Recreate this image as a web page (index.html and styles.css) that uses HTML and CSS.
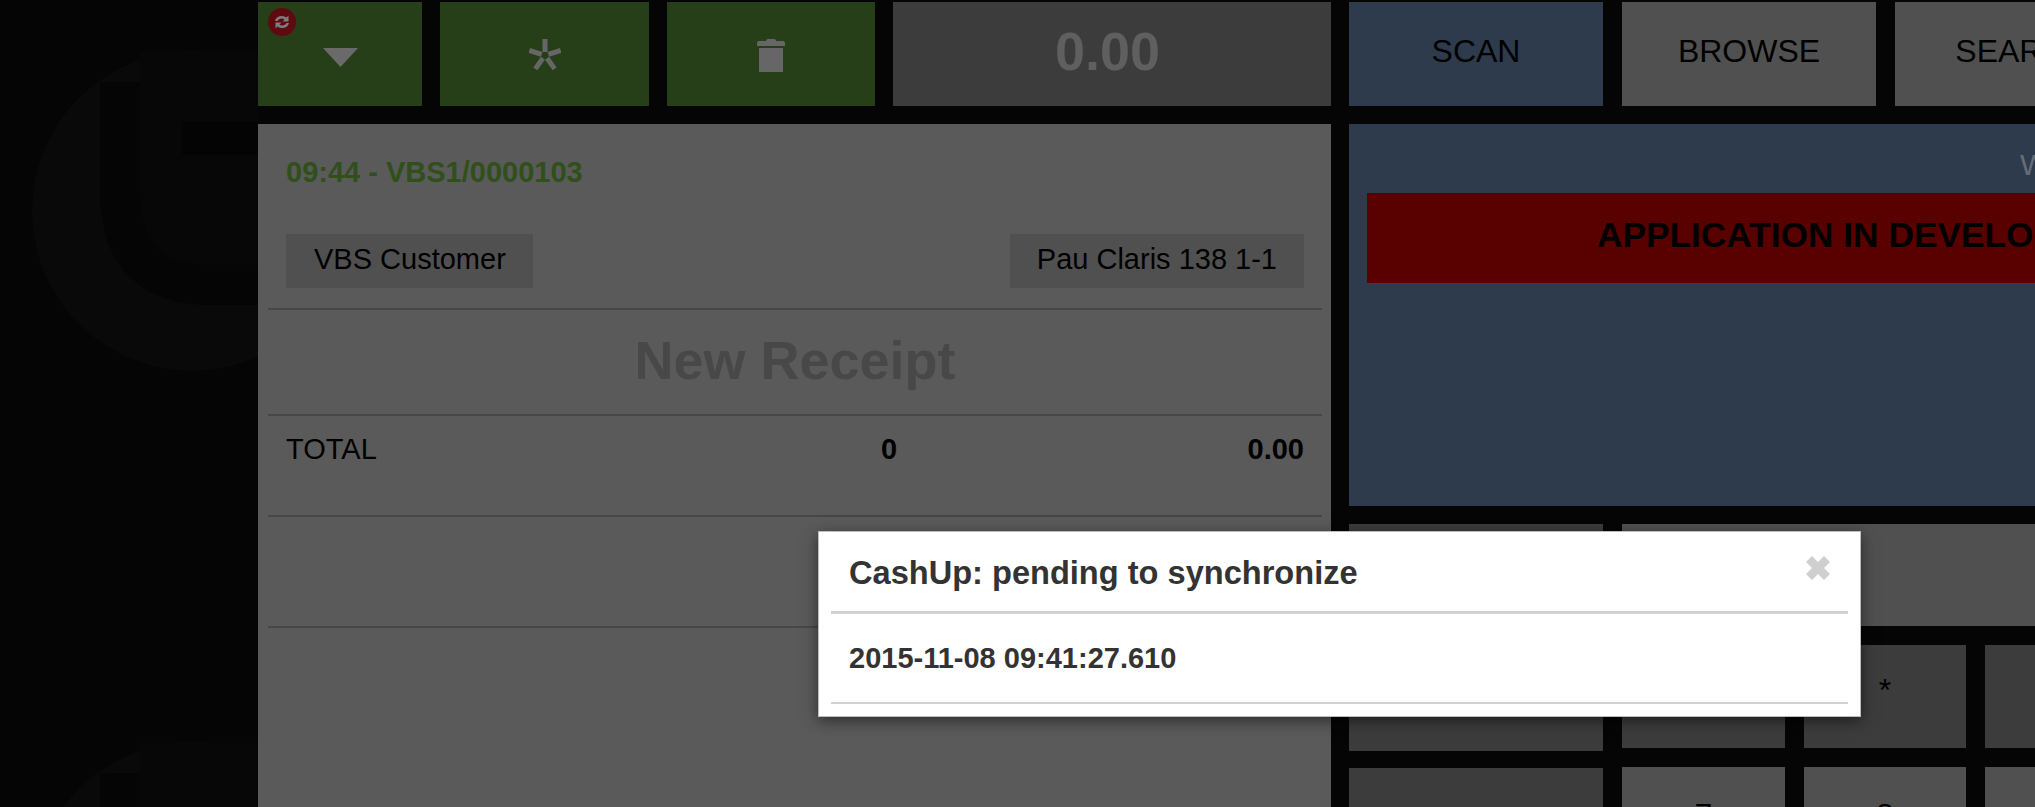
FILE: index.html
```html
<!DOCTYPE html>
<html>
	<head>
		<meta charset=utf-8>
		<meta name="viewport" content="width=device-width, initial-scale=1">
		<title>Web POS</title>
		<link rel="stylesheet" href="styles.css">
	</head>
	<body>
		<svg class="backdrop" width="258" height="807" viewBox="0 0 258 807">
			<circle cx="192" cy="211" r="160" fill="#090909"/>
			<path d="M120 82 V190 Q120 285 210 285 H258" fill="none" stroke="#050505" stroke-width="40"/>
			<path d="M140 52 H258 V265 H210 Q140 265 140 190 Z" fill="#070707"/>
			<rect x="182" y="121" width="76" height="34" fill="#040404"/>
			<circle cx="192" cy="902" r="160" fill="#090909"/>
			<path d="M140 743 H258 V807 H140 Z" fill="#070707"/>
			<rect x="100" y="773" width="40" height="34" fill="#050505"/>
		</svg>

		<div class="screen">
			<div class="column column-left">
				<div class="toolbar">
					<div class="btn btn-green btn-menu">
						<span class="sync-badge">
							<svg width="20" height="20" viewBox="0 0 20 20"><path d="M3 9 A7 6 0 0 1 14.500 5.500 L16.500 3.500 V9.500 H10.500 L12.500 7.500 A4.500 4 0 0 0 5.500 9 Z M17 11 A7 6 0 0 1 5.500 14.500 L3.500 16.500 V10.500 H9.500 L7.500 12.500 A4.500 4 0 0 0 14.500 11 Z" fill="#7d7d7d"/></svg>
						</span>
						<svg width="35" height="19" viewBox="0 0 35 19"><path d="M0 0 H35 L17.500 19 Z" fill="#6a6a6a"/></svg>
					</div>
					<div class="btn btn-green btn-star">
						<svg width="32" height="32" viewBox="0 0 32 32"><g fill="#666"><rect x="13.500" y="0" width="5" height="13"/><rect x="13.500" y="0" width="5" height="13" transform="rotate(72 16 16.500)"/><rect x="13.500" y="0" width="5" height="13" transform="rotate(144 16 16.500)"/><rect x="13.500" y="0" width="5" height="13" transform="rotate(216 16 16.500)"/><rect x="13.500" y="0" width="5" height="13" transform="rotate(288 16 16.500)"/></g></svg>
					</div>
					<div class="btn btn-green btn-trash">
						<svg width="28" height="33" viewBox="0 0 28 33"><path d="M9 2 Q9 0 11 0 H17 Q19 0 19 2 H26 Q28 2 28 4 V7 H0 V4 Q0 2 2 2 Z M2 9 H26 V33 H2 Z" fill="#666"/></svg>
					</div>
					<div class="btn total-amount">0.00</div>
				</div>

				<div class="receipt">
					<div class="receipt-id">09:44 - VBS1/0000103</div>
					<div class="receipt-parties">
						<span class="party">VBS Customer</span>
						<span class="party party-address">Pau Claris 138 1-1</span>
					</div>
					<div class="receipt-empty">New Receipt</div>
					<div class="receipt-total">
						<span>TOTAL</span>
						<b>0</b>
						<b class="total-value">0.00</b>
					</div>
					<div class="receipt-spare"></div>
				</div>
			</div>

			<div class="column column-right">
				<div class="toolbar toolbar-tabs">
					<div class="btn btn-tab btn-blue">SCAN</div>
					<div class="btn btn-tab btn-grey">BROWSE</div>
					<div class="btn btn-tab btn-grey">SEARCH</div>
				</div>

				<div class="scan-panel">
					<div class="welcome">Welcome</div>
					<div class="dev-banner">APPLICATION IN DEVELOPMENT</div>
				</div>

				<div class="keypad">
					<div class="keypad-side">
						<div class="key key-dark key-side-top"></div>
						<div class="key key-dark key-side-bottom"></div>
					</div>
					<div class="keypad-grid">
						<div class="key key-grey key-wide"></div>
						<div class="key key-dark"></div>
						<div class="key key-dark">*</div>
						<div class="key key-dark"></div>
						<div class="key key-grey">7</div>
						<div class="key key-grey">8</div>
						<div class="key key-grey"></div>
					</div>
				</div>
			</div>
		</div>

		<div class="modal">
			<div class="modal-header">
				<span>CashUp: pending to synchronize</span>
				<svg class="modal-close" width="24" height="24" viewBox="0 0 24 24"><path d="M6 0 L12 6 L18 0 L24 6 L18 12 L24 18 L18 24 L12 18 L6 24 L0 18 L6 12 L0 6 Z" fill="#cfcfcf"/></svg>
			</div>
			<div class="modal-body">2015-11-08 09:41:27.610</div>
		</div>
	</body>
</html>
```

FILE: styles.css
```css
html, body { margin: 0; padding: 0; height: 100%; overflow: hidden; }
body {
	background: #050505;
	font-family: 'Liberation Sans', Arial, sans-serif;
	font-size: 29px;
	color: #000;
}
.backdrop { position: absolute; left: 0; top: 0; }

.screen {
	position: relative;
	display: flex;
	gap: 18px;
	width: 2200px;
	padding: 2px 0 0 258px;
}
.column { display: flex; flex-direction: column; gap: 18px; }
.column-left { width: 1073px; flex: none; }
.column-right { width: 1056px; flex: none; }

/* top row */
.toolbar { display: flex; gap: 18px; height: 104px; }
.btn {
	display: flex;
	align-items: center;
	justify-content: center;
	position: relative;
	box-sizing: border-box;
}
.btn-green { background: #273f18; }
.btn-menu { width: 164px; }
.btn-menu > svg { margin-top: 7px; }
.btn-star { width: 209px; }
.btn-star > svg { margin-top: 2px; }
.btn-trash { width: 208px; }
.btn-trash > svg { margin-top: 2px; }
.total-amount {
	flex: 1;
	background: #3c3c3c;
	color: #5f5f5f;
	font-size: 54px;
	font-weight: bold;
	padding: 0 9px 6px 0;
}
.sync-badge {
	position: absolute;
	left: 10px;
	top: 6px;
	width: 28px;
	height: 28px;
	border-radius: 50%;
	background: #5e0a10;
	display: flex;
	align-items: center;
	justify-content: center;
}
.toolbar-tabs { gap: 19px; }
.btn-tab { width: 254px; font-size: 32px; padding-bottom: 6px; }
.btn-blue { background: #2d3b4d; }
.btn-grey { background: #505050; }

/* receipt */
.receipt {
	height: 683px;
	background: #5a5a5a;
	padding: 0 9px 0 10px;
}
.receipt-id {
	color: #304f1b;
	font-weight: bold;
	padding: 31px 0 0 18px;
	height: 79px;
	box-sizing: border-box;
	line-height: 34px;
}
.receipt-parties {
	display: flex;
	justify-content: space-between;
	padding: 31px 18px 20px 18px;
	border-bottom: 2px solid #474747;
}
.party {
	background: #505050;
	height: 54px;
	line-height: 50px;
	padding: 0 27px 0 28px;
}
.party-address { padding: 0 27px; }
.receipt-empty {
	height: 104px;
	line-height: 100px;
	text-align: center;
	font-size: 54px;
	font-weight: bold;
	color: #484848;
	border-bottom: 2px solid #474747;
}
.receipt-total {
	display: grid;
	grid-template-columns: 1fr 16px 407px;
	height: 99px;
	padding: 0 18px;
	line-height: 66px;
	border-bottom: 2px solid #474747;
}
.total-value { text-align: right; }
.receipt-spare { height: 109px; border-bottom: 2px solid #474747; }

/* scan area */
.scan-panel {
	height: 382px;
	background: #2d3b4d;
	box-sizing: border-box;
	padding: 24px 18px 0;
}
.welcome {
	color: #656c76;
	font-size: 30px;
	line-height: 34px;
	padding-left: 653px;
}
.dev-banner {
	margin-top: 11px;
	height: 90px;
	line-height: 84px;
	background: #590000;
	text-align: center;
	font-size: 35.300px;
	font-weight: bold;
}

/* keypad */
.keypad { display: flex; gap: 19px; }
.keypad-side { display: flex; flex-direction: column; gap: 17px; width: 254px; flex: none; }
.keypad-grid {
	flex: 1;
	display: grid;
	grid-template-columns: 163px 162px 163px;
	grid-template-rows: 102px 103px 140px;
	column-gap: 19px;
	row-gap: 19px;
}
.key {
	text-align: center;
	font-size: 32px;
}
.key-dark { background: #3c3c3c; line-height: 90px; }
.key-grey { background: #505050; line-height: 96px; }
.key-wide { grid-column: 1 / -1; }
.key-side-top { height: 227px; }
.key-side-bottom { height: 140px; }

/* popup */
.modal {
	position: absolute;
	left: 818px;
	top: 531px;
	width: 1043px;
	height: 186px;
	box-sizing: border-box;
	background: #fff;
	border: 1px solid #bdbdbd;
	padding: 0 12px;
	box-shadow: 0 4px 14px rgba(0, 0, 0, 0.5);
	color: #333;
	font-weight: bold;
}
.modal-header {
	display: flex;
	justify-content: space-between;
	height: 82px;
	padding: 24px 18px 0 18px;
	box-sizing: border-box;
	font-size: 32.600px;
	line-height: 34px;
	border-bottom: 3px solid #d2d2d2;
}
.modal-close { margin-top: 0; }
.modal-body {
	height: 90px;
	padding: 27px 0 0 18px;
	box-sizing: border-box;
	line-height: 34px;
	border-bottom: 2px solid #d2d2d2;
}
```
